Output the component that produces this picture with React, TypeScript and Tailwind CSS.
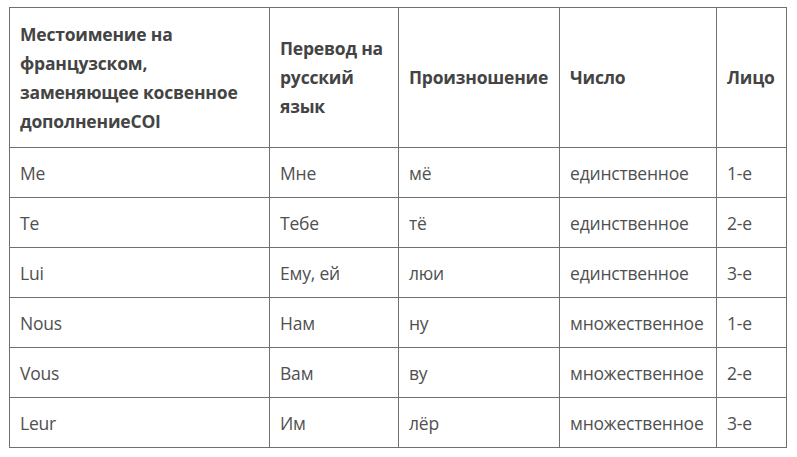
const header = [
  "Местоимение на французском, заменяющее косвенное дополнениеCOI",
  "Перевод на русский язык",
  "Произношение",
  "Число",
  "Лицо",
];

const rows = [
  ["Me", "Мне", "мё", "единственное", "1-е"],
  ["Te", "Тебе", "тё", "единственное", "2-е"],
  ["Lui", "Ему, ей", "люи", "единственное", "3-е"],
  ["Nous", "Нам", "ну", "множественное", "1-е"],
  ["Vous", "Вам", "ву", "множественное", "2-е"],
  ["Leur", "Им", "лёр", "множественное", "3-е"],
];

const widths = ["w-[260px]", "w-[129px]", "w-[161px]", "w-[157px]", "w-[70px]"];

export default function App() {
  return (
    <div className="w-[797px] h-[457px] bg-white pt-[7px] pl-[9px] font-['Open_Sans',sans-serif] text-[#444]">
      <table className="table-fixed border-collapse w-[778px]">
        <colgroup>
          {widths.map((w, i) => (
            <col key={i} className={w} />
          ))}
        </colgroup>
        <thead>
          <tr className="h-[140px]">
            {header.map((h, i) => (
              <th
                key={i}
                className="border border-[#707070] text-left align-middle font-bold text-[17.5px] leading-[29px] pl-[10px] pr-[6px] tracking-[-0.2px]"
              >
                {h}
              </th>
            ))}
          </tr>
        </thead>
        <tbody>
          {rows.map((r, ri) => (
            <tr key={ri} className="h-[50px]">
              {r.map((c, ci) => (
                <td
                  key={ci}
                  className="border border-[#707070] px-[10px] text-[17.5px] leading-[24px] align-middle whitespace-nowrap text-[#505050] tracking-[-0.2px]"
                >
                  {c}
                </td>
              ))}
            </tr>
          ))}
        </tbody>
      </table>
    </div>
  );
}
